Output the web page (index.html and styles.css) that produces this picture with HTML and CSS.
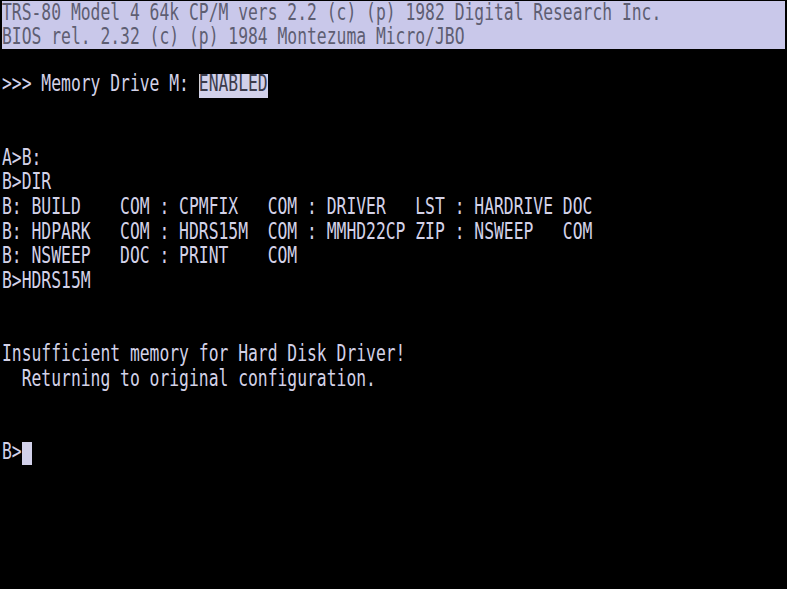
FILE: index.html
```html
<!DOCTYPE html>
<html>
<head>
<meta charset="utf-8">
<link rel="stylesheet" href="styles.css">
</head>
<body>
<div class="screen">
  <div class="band">
    <div class="row"><span class="t">TRS-80 Model 4 64k CP/M vers 2.2 (c) (p) 1982 Digital Research Inc.</span></div>
    <div class="row"><span class="t">BIOS rel. 2.32 (c) (p) 1984 Montezuma Micro/JBO</span></div>
  </div>
  <div class="row"></div>
  <div class="row"><span class="t">&gt;&gt;&gt; Memory Drive M: </span><span class="rev"><span class="t">ENABLED</span></span></div>
  <div class="row"></div>
  <div class="row"></div>
  <div class="row"><span class="t">A&gt;B:</span></div>
  <div class="row"><span class="t">B&gt;DIR</span></div>
  <div class="row"><span class="t">B: BUILD    COM : CPMFIX   COM : DRIVER   LST : HARDRIVE DOC</span></div>
  <div class="row"><span class="t">B: HDPARK   COM : HDRS15M  COM : MMHD22CP ZIP : NSWEEP   COM</span></div>
  <div class="row"><span class="t">B: NSWEEP   DOC : PRINT    COM</span></div>
  <div class="row"><span class="t">B&gt;HDRS15M</span></div>
  <div class="row"></div>
  <div class="row"></div>
  <div class="row"><span class="t">Insufficient memory for Hard Disk Driver!</span></div>
  <div class="row"><span class="t">  Returning to original configuration.</span></div>
  <div class="row"></div>
  <div class="row"></div>
  <div class="row"><span class="t">B&gt;</span><span class="cursor"></span></div>
  <div class="row"></div>
  <div class="row"></div>
  <div class="row"></div>
  <div class="row"></div>
  <div class="row"></div>
</div>
</body>
</html>
```
FILE: styles.css
```css
html, body {
  margin: 0;
  padding: 0;
  background: #000;
}
.screen {
  width: 787px;
  height: 589px;
  overflow: hidden;
  background: #000;
  color: #d3d2e8;
  font-family: "DejaVu Sans Mono", "Liberation Mono", monospace;
  font-size: 16.35px;
  display: flex;
  flex-direction: column;
}
.band {
  background: #c9c8ea;
  color: #5e5e72;
  margin: 1px 2px 0 2px;
}
.row {
  height: 24.54px;
  white-space: pre;
  padding-left: 2px;
  flex: none;
  display: flex;
  align-items: center;
}
.band .row {
  padding-left: 0;
}
.band .row:first-child {
  height: 23.54px;
}
.t {
  display: block;
  line-height: 16px;
  height: 16px;
  margin-bottom: 3px;
  transform: scaleY(1.36);
}
.band .t {
  margin-bottom: 0;
}
.rev {
  display: flex;
  align-items: center;
  align-self: stretch;
  background: #d2d1ea;
  color: #3c3c4c;
}
.cursor {
  width: 10px;
  height: 23px;
  background: #d2d1ea;
}
```
